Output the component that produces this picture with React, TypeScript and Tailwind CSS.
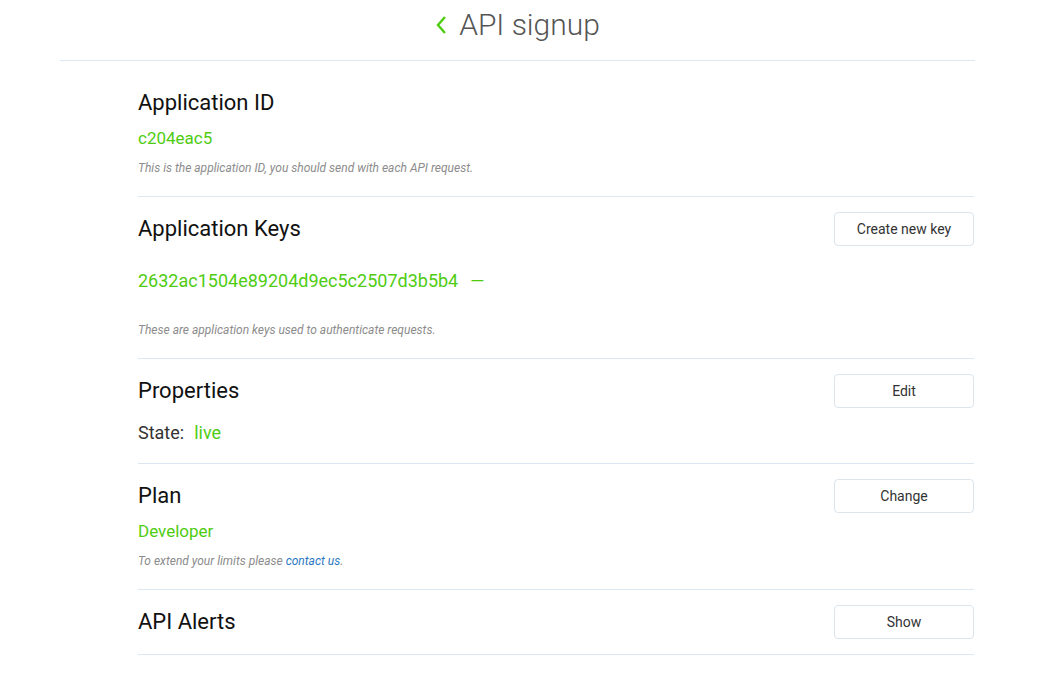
import * as React from "react";

const GREEN = "text-[#4fcc12]";

function ActionButton({ label }: { label: string }) {
  return (
    <button
      type="button"
      className="h-[34px] w-[140px] rounded-[4px] border border-[#dbe5ee] bg-white text-[14px] text-[#333]"
    >
      {label}
    </button>
  );
}

function SectionHead({ title, action }: { title: string; action?: string }) {
  return (
    <div className="flex h-[34px] items-center justify-between">
      <h2 className="text-[22px] leading-6 text-[#111]">{title}</h2>
      {action && <ActionButton label={action} />}
    </div>
  );
}

function Note({ children }: { children: React.ReactNode }) {
  return <p className="text-[12px] italic leading-4 text-[#8c8c8c]">{children}</p>;
}

export default function App() {
  return (
    <div className="min-h-screen bg-white font-['Roboto',sans-serif]">
      <div className="ml-[60px] w-[915px]">
        <header className="flex h-[61px] items-center justify-center gap-3 border-b border-[#dbe8f3] pb-[12px]">
          <svg width="12" height="20" viewBox="0 0 12 20" className="mt-[2px]">
            <path d="M10 2 L3 10 L10 18" fill="none" stroke="#4fcc12" strokeWidth="2.4" />
          </svg>
          <h1 className="text-[30px] font-light text-[#555]">API signup</h1>
        </header>

        <main className="ml-[78px] mr-[1px]">
          <section className="border-b border-[#dbe8f3] pb-[20px] pt-[25px]">
            <SectionHead title="Application ID" />
            <div className={`mt-[8px] text-[17px] leading-5 ${GREEN}`}>c204eac5</div>
            <div className="mt-[12px]">
              <Note>This is the application ID, you should send with each API request.</Note>
            </div>
          </section>

          <section className="border-b border-[#dbe8f3] pb-[20px] pt-[15px]">
            <SectionHead title="Application Keys" action="Create new key" />
            <div className={`mt-[25px] flex items-center gap-3 text-[18px] leading-5 ${GREEN}`}>
              <span>2632ac1504e89204d9ec5c2507d3b5b4</span>
              <span>—</span>
            </div>
            <div className="mt-[31px]">
              <Note>These are application keys used to authenticate requests.</Note>
            </div>
          </section>

          <section className="border-b border-[#dbe8f3] pb-[20px] pt-[15px]">
            <SectionHead title="Properties" action="Edit" />
            <div className="mt-[15px] flex gap-[10px] text-[18px] leading-5">
              <span className="text-[#333]">State:</span>
              <span className={GREEN}>live</span>
            </div>
          </section>

          <section className="border-b border-[#dbe8f3] pb-[20px] pt-[15px]">
            <SectionHead title="Plan" action="Change" />
            <div className={`mt-[8px] text-[17px] leading-5 ${GREEN}`}>Developer</div>
            <div className="mt-[12px]">
              <Note>
                To extend your limits please{" "}
                <a href="#" className="text-[#2a78c2]">contact us</a>.
              </Note>
            </div>
          </section>

          <section className="border-b border-[#dbe8f3] pb-[15px] pt-[15px]">
            <SectionHead title="API Alerts" action="Show" />
          </section>
        </main>
      </div>
    </div>
  );
}
